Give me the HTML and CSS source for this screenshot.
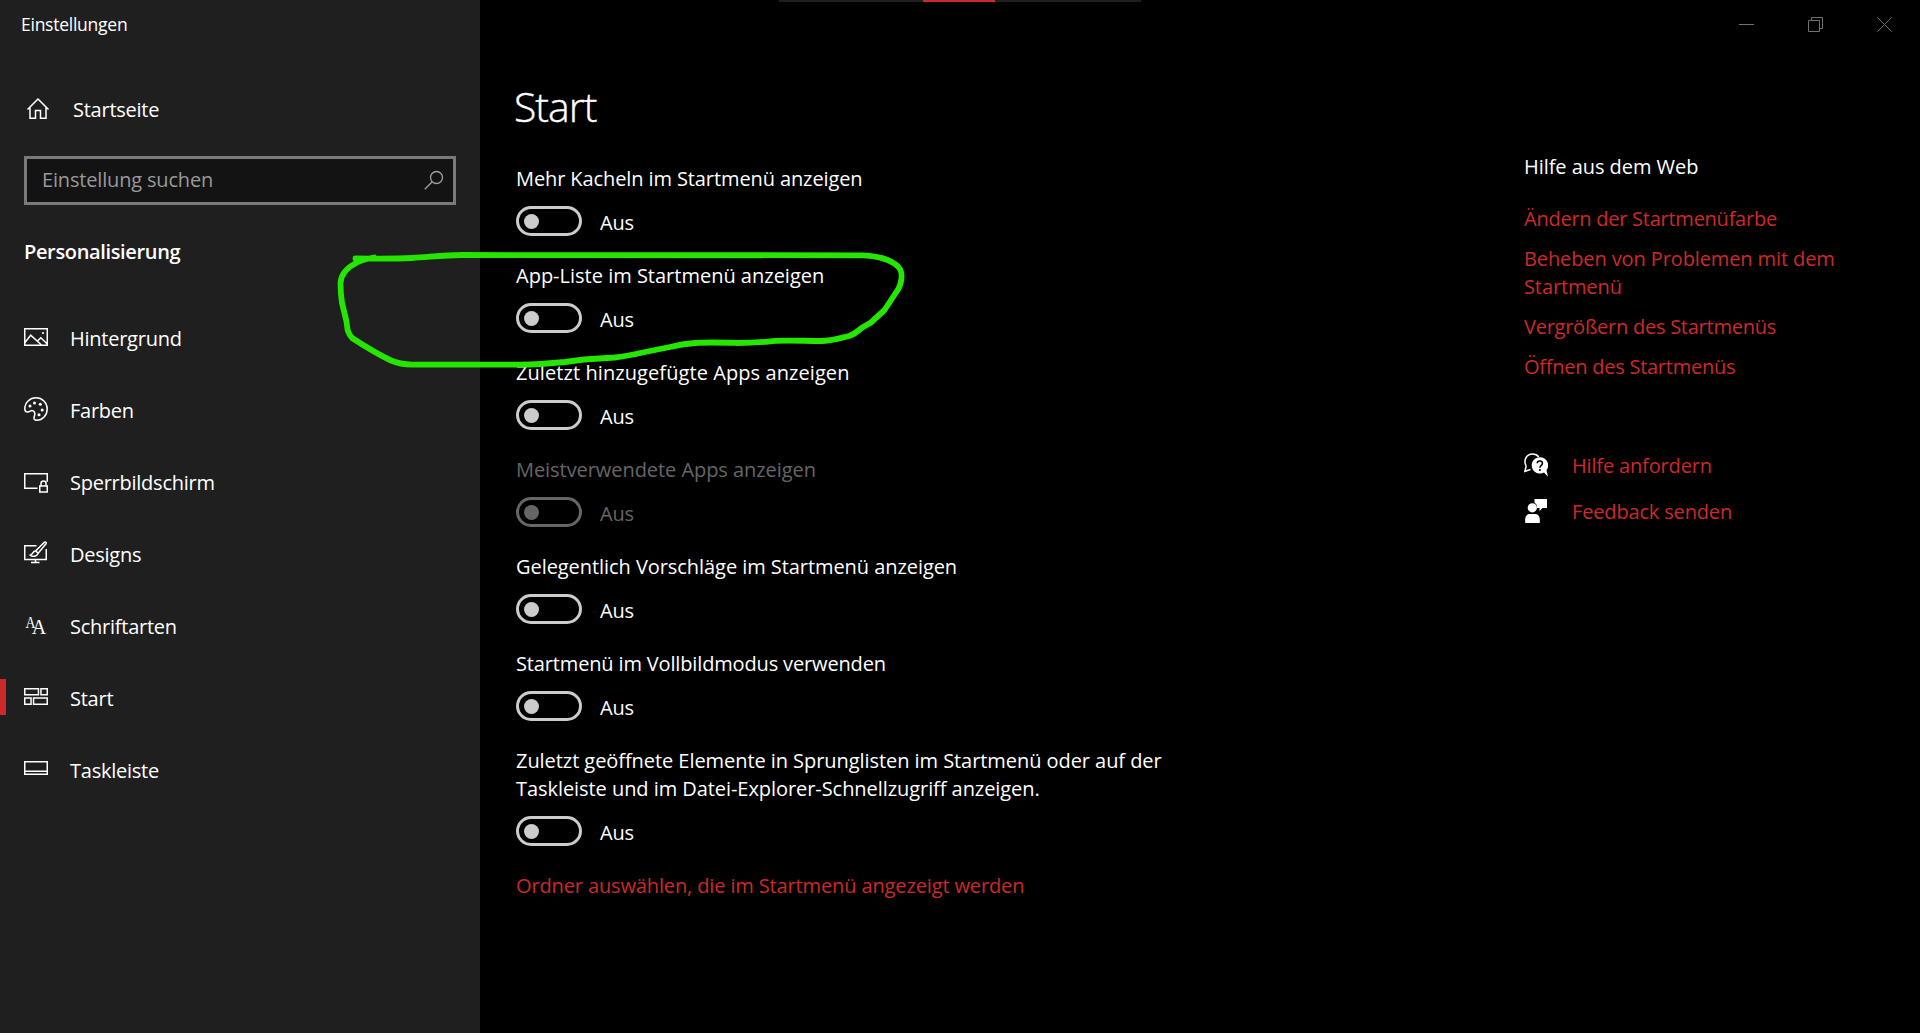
FILE: index.html
```
<!DOCTYPE html>
<html lang="de">
<head>
    <meta charset="UTF-8">
    <meta name="viewport" content="width=device-width, initial-scale=1.0">
    <title>Einstellungen</title>
    <link rel="stylesheet" href="styles.css">
</head>
<body>
    <!-- Seitenleiste -->
    <div class="sidebar">
        <div class="app-title">Einstellungen</div>
        <div class="home">
            <svg class="icon" viewBox="0 0 24 24"><path d="M1.5 12.5L12 2l10.500 10.500M4 10.500V21.200h5.500v-7.700h5v7.700H20V10.500"/></svg>
            <span>Startseite</span>
        </div>
        <div class="search">
            <span>Einstellung suchen</span>
            <svg class="search-icon" viewBox="0 0 20 20"><circle cx="12.500" cy="7.500" r="6"/><path d="M8.200 11.800L.8 19.200"/></svg>
        </div>
        <h2 class="category">Personalisierung</h2>
        <div class="nav">
            <div class="nav-item">
                <svg class="icon" viewBox="0 0 24 24"><path d="M.75 3.750h22.500v16.500H.75zM1 17.500l5.700-7.300 10.800 9.800M13.500 16l3.300-3.300 6.200 6"/><circle class="dot" cx="19" cy="8" r="1.100"/></svg>
                <span>Hintergrund</span>
            </div>
            <div class="nav-item">
                <svg class="icon" viewBox="0 0 24 24"><path d="M.8 12C.8 5.500 5.800.8 12 .8S23.200 5.800 23.200 12 18.500 23.200 12.700 23.200c-2 0-3-1-2.700-2.700.3-1.500 1.200-2.700.8-4.300-.5-2.200-2.500-3.200-4.300-2.200-1.300.8-2 1.300-3.500 1-1.500-.3-2.200-1.500-2.200-3z"/><circle class="dot" cx="6" cy="9" r="1.500"/><circle class="dot" cx="10.500" cy="6" r="1.500"/><circle class="dot" cx="16.300" cy="7.300" r="1.500"/><circle class="dot" cx="18.200" cy="13" r="1.500"/><circle class="dot" cx="15" cy="17.700" r="1.500"/></svg>
                <span>Farben</span>
            </div>
            <div class="nav-item">
                <svg class="icon" viewBox="0 0 24 24"><path d="M13.500 19.200H.75V4.750h22.500v8M15.750 17h7.500v6h-7.500zM17 17v-2.500c0-3.300 5-3.300 5 0V17"/></svg>
                <span>Sperrbildschirm</span>
            </div>
            <div class="nav-item">
                <svg class="icon" viewBox="0 0 24 24"><path d="M12.500 4.750H.75v13.700h21.500V8M11.500 18.500V21M7 21.500h8.500M20.500 1.200c1-.7 2.200.3 1.500 1.500l-7.800 9.500-2.600-2.300zM11.300 10c-2.500 0-2.300 3.800-5 4.300 2.200 2 7.200 1 7.800-2.200"/></svg>
                <span>Designs</span>
            </div>
            <div class="nav-item">
                <svg class="icon" viewBox="0 0 24 24"><text x="1.500" y="14.500" font-size="17" textLength="10" lengthAdjust="spacingAndGlyphs">A</text><text x="7.800" y="20.800" font-size="20">A</text></svg>
                <span>Schriftarten</span>
            </div>
            <div class="nav-item active">
                <svg class="icon" viewBox="0 0 24 24"><path d="M.75 3.750h13.700v6H.75zM16.950 3.750h6.300v6h-6.300zM.75 12.950h6.300v6.300H.75zM9.550 12.950h13.700v6.300H9.550z"/></svg>
                <span>Start</span>
            </div>
            <div class="nav-item">
                <svg class="icon" viewBox="0 0 24 24"><path d="M.75 4.750h22.500v12.500H.75zM.75 14.200h22.500"/></svg>
                <span>Taskleiste</span>
            </div>
        </div>
    </div>

    <!-- Hauptbereich -->
    <div class="main">
        <div class="window-buttons">
            <div class="window-button"><svg viewBox="0 0 15 15"><path d="M0 7.500h15"/></svg></div>
            <div class="window-button"><svg viewBox="0 0 15 15"><path d="M.5 3.500h11v11H.5zM3.500 3.500v-3h11v11h-3"/></svg></div>
            <div class="window-button"><svg viewBox="0 0 15 15"><path d="M.3.3l14.400 14.400M14.700.3L.3 14.700"/></svg></div>
        </div>
        <div class="page">
            <div class="content">
                <h1>Start</h1>
                <div class="setting more-tiles">
                    <div class="label">Mehr Kacheln im Startmenü anzeigen</div>
                    <div class="toggle-row"><div class="toggle"></div><span>Aus</span></div>
                </div>
                <div class="setting app-list">
                    <div class="label">App-Liste im Startmenü anzeigen</div>
                    <div class="toggle-row"><div class="toggle"></div><span>Aus</span></div>
                </div>
                <div class="setting recent-apps">
                    <div class="label">Zuletzt hinzugefügte Apps anzeigen</div>
                    <div class="toggle-row"><div class="toggle"></div><span>Aus</span></div>
                </div>
                <div class="setting disabled">
                    <div class="label">Meistverwendete Apps anzeigen</div>
                    <div class="toggle-row"><div class="toggle"></div><span>Aus</span></div>
                </div>
                <div class="setting">
                    <div class="label">Gelegentlich Vorschläge im Startmenü anzeigen</div>
                    <div class="toggle-row"><div class="toggle"></div><span>Aus</span></div>
                </div>
                <div class="setting fullscreen">
                    <div class="label">Startmenü im Vollbildmodus verwenden</div>
                    <div class="toggle-row"><div class="toggle"></div><span>Aus</span></div>
                </div>
                <div class="setting">
                    <div class="label">Zuletzt geöffnete Elemente in Sprunglisten im Startmenü oder auf der<br>Taskleiste und im Datei-Explorer-Schnellzugriff anzeigen.</div>
                    <div class="toggle-row"><div class="toggle"></div><span>Aus</span></div>
                </div>
                <a class="folder-link">Ordner auswählen, die im Startmenü angezeigt werden</a>
            </div>

            <div class="help">
                <div class="help-title">Hilfe aus dem Web</div>
                <a>Ändern der Startmenüfarbe</a>
                <a class="problems">Beheben von Problemen mit dem<br>Startmenü</a>
                <a>Vergrößern des Startmenüs</a>
                <a>Öffnen des Startmenüs</a>
                <div class="support">
                    <div class="support-item">
                        <svg class="icon" viewBox="0 0 24 24"><path d="M2.200 13C-.8 8 2 1 8.500 1c3 0 5 1.200 6.300 3M2.200 13L.9 18.300 6.500 16.500"/><path class="fill" d="M16 4.200a8.200 8.200 0 1 0 4 15.300l4 4.300-1.500-6.500A8.200 8.200 0 0 0 16 4.200z"/><path class="cut" d="M13.200 10.200c.2-3 5.300-2.800 5.200.2 0 2-2.500 2-2.500 4.300M15.900 16v2"/></svg>
                        <a>Hilfe anfordern</a>
                    </div>
                    <div class="support-item">
                        <svg class="icon" viewBox="0 0 24 24"><path class="fill" d="M10.500 0H23v9h-4.500L15.500 12V9H13a5.500 5.500 0 0 0-2.500-5.500zM1.200 24v-3.500c0-3.500 2-5.500 5-5.500h4.600c3 0 5 2 5 5.500V24z"/><circle class="fill" cx="8.300" cy="8.800" r="4.600"/></svg>
                        <a>Feedback senden</a>
                    </div>
                </div>
            </div>
        </div>
    </div>

    <!-- Leiste am oberen Rand -->
    <div class="top-strip"><div></div></div>

    <!-- Grüne Markierung -->
    <svg class="marker" viewBox="0 0 1920 1033"><path d="M355.500 258.500C375 258.500 392 259 412 258C430 257 443 255 462 255L863 255.300C878 256 888 259 895 264C901 268 902 272 901.500 278C901 283 900 287 897 291L884.500 310L871 322.500L861.500 328Q855 334 849 336C840 338 832 341 821 341C805 341 792 340 775 340.800Q757 343 737 343C722 342.500 708 342 695 343C683 344 678 345 670 347L645 352C632 355 625 356.500 614.700 357.500L584 359.500L565 362Q540 364.500 519 364.700H412C405 364.500 398 363.500 391 360.500Q375 353 352.500 338.300Q349 335 347.600 330L346.500 321.500L342 303Q340.500 293 340.500 283C341 273 348 267 357 262.500Q364 259 374 257.500"/></svg>
</body>
</html>
```
FILE: styles.css
```
* {
    box-sizing: border-box;
}

body {
    margin: 0;
    display: flex;
    height: 1033px;
    background: #000;
    color: #fff;
    font-family: "Open Sans", "Noto Sans", sans-serif;
    font-size: 20px;
    line-height: 28px;
    letter-spacing: -0.25px;
    white-space: nowrap;
    overflow: hidden;
}

a {
    color: #cc2a28;
}

.icon {
    width: 24px;
    height: 24px;
    flex: none;
    fill: none;
    stroke: #fff;
    stroke-width: 1.5;
}

.icon .dot,
.icon .fill,
.icon text {
    fill: #fff;
    stroke: none;
}

.icon .cut {
    stroke: #000;
    stroke-width: 1.6;
}

.icon text {
    font-family: "Liberation Serif", serif;
    letter-spacing: 0;
}

/* Seitenleiste */
.sidebar {
    width: 480px;
    flex: none;
    background: #1f1f1f;
}

.app-title {
    height: 73px;
    padding: 10px 0 0 21px;
    font-size: 17.5px;
}

.home {
    display: flex;
    align-items: center;
    height: 72px;
    padding-left: 26px;
    gap: 23px;
}

.home span {
    padding-top: 2px;
}

.search {
    display: flex;
    align-items: center;
    justify-content: space-between;
    height: 49px;
    margin: 11px 24px 0;
    padding: 0 9px 2px 15px;
    border: 3px solid #7a7a7a;
    background: #131313;
    color: #999;
    letter-spacing: -0.17px;
}

.search-icon {
    width: 20px;
    height: 20px;
    fill: none;
    stroke: #a0a0a0;
    stroke-width: 1.3;
}

.category {
    margin: 33px 0 35px 24px;
    font-size: 20px;
    font-weight: 600;
    letter-spacing: -0.35px;
}

.nav-item {
    display: flex;
    align-items: center;
    height: 72px;
    padding-left: 24px;
    gap: 22px;
}

.nav-item span {
    padding-top: 4px;
}

.active {
    padding-left: 18px;
}

.active::before {
    content: "";
    width: 6px;
    height: 36px;
    margin: 0 -4px 0 -18px;
    background: #cc2a28;
}

/* Hauptbereich */
.main {
    flex: 1;
}

.window-buttons {
    display: flex;
    justify-content: flex-end;
    height: 49px;
    padding-right: 1px;
}

.window-button {
    display: flex;
    align-items: center;
    justify-content: center;
    width: 69px;
}

.window-button svg {
    width: 15px;
    height: 15px;
    fill: none;
    stroke: #707070;
}

.page {
    display: flex;
    justify-content: space-between;
    padding-left: 36px;
}

.content h1 {
    margin: 29px 0 31px -2px;
    font-size: 41px;
    font-weight: 300;
    line-height: 56px;
    letter-spacing: -1px;
    -webkit-text-stroke: 0.4px #fff;
}

.setting {
    margin-bottom: 26px;
}

.label {
    letter-spacing: -0.06px;
}

.more-tiles .label {
    letter-spacing: -0.1px;
}

.app-list .label {
    letter-spacing: 0;
}

.recent-apps .label {
    letter-spacing: 0.08px;
}

.fullscreen .label {
    letter-spacing: -0.15px;
}

.folder-link {
    letter-spacing: -0.13px;
}

.toggle-row {
    display: flex;
    gap: 18px;
    margin-top: 13px;
    height: 30px;
}

.toggle-row span {
    padding-top: 3px;
}

.toggle {
    width: 66px;
    height: 30px;
    padding: 5px;
    border: 3px solid #ccc;
    border-radius: 15px;
}

.toggle::before {
    content: "";
    display: block;
    width: 15px;
    height: 15px;
    border-radius: 50%;
    background: #ccc;
}

.disabled {
    color: #666;
}

.disabled .toggle {
    border-color: #666;
}

.disabled .toggle::before {
    background: #666;
}

.help {
    display: flex;
    flex-direction: column;
    gap: 12px;
    width: 396px;
    padding-top: 104px;
}

.help-title {
    margin-bottom: 12px;
    letter-spacing: -0.05px;
}

.problems {
    letter-spacing: -0.11px;
}

.support {
    display: flex;
    flex-direction: column;
    gap: 16px;
    margin-top: 57px;
    letter-spacing: -0.16px;
}

.support-item {
    display: flex;
    align-items: center;
    gap: 24px;
}

.support-item a {
    padding-top: 2px;
}

/* Über dem Inhalt */
.top-strip {
    position: absolute;
    top: 0;
    left: 779px;
    width: 362px;
    background: #1f1f1f;
}

.top-strip div {
    width: 72px;
    height: 2px;
    margin-left: 144px;
    background: #cc2a28;
}

.marker {
    position: absolute;
    top: 0;
    left: 0;
    width: 1920px;
    height: 1033px;
    fill: none;
    stroke: #26e600;
    stroke-width: 5.8;
    stroke-linecap: round;
    stroke-linejoin: round;
    pointer-events: none;
}
```
